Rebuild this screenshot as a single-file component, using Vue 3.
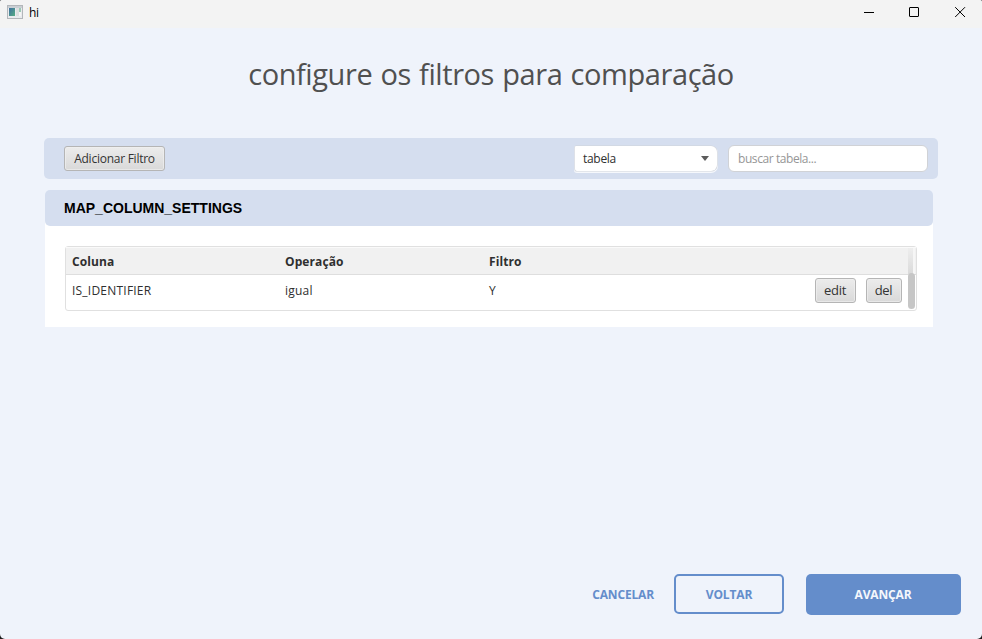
<script setup>
const filters = [{ column: 'IS_IDENTIFIER', operation: 'igual', value: 'Y' }]
</script>

<template>
  <div class="window">
    <header class="titlebar">
      <svg class="app-icon" width="16" height="14" viewBox="0 0 16 14">
        <defs>
          <linearGradient id="pane" x1="0" y1="0" x2="1" y2="1">
            <stop offset="0" stop-color="#3f6fa0" />
            <stop offset="1" stop-color="#55ad83" />
          </linearGradient>
        </defs>
        <rect x="0.5" y="0.5" width="15" height="13" fill="#e9ebee" stroke="#b3b6ba" />
        <rect x="1" y="1" width="14" height="2" fill="#c9ced3" />
        <rect x="2" y="3" width="6" height="8" fill="url(#pane)" />
        <rect x="9" y="3" width="3" height="8" fill="#dcdfe0" />
        <rect x="12" y="3" width="2" height="4" fill="#9bc9b5" />
        <rect x="12" y="7" width="2" height="4" fill="#f5f5f5" />
      </svg>
      <span class="app-name">hi</span>
      <div class="controls">
        <svg width="46" height="24" viewBox="0 0 46 24"><path d="M20 12.5h10" /></svg>
        <svg width="46" height="24" viewBox="0 0 46 24"><rect x="19.5" y="7.5" width="9" height="9" rx="0.4" /></svg>
        <svg width="46" height="24" viewBox="0 0 46 24"><path d="M19.2 7.2l9.8 9.8M29 7.2l-9.8 9.8" /></svg>
      </div>
    </header>

    <h1>configure os filtros para comparação</h1>

    <section class="toolbar">
      <button class="btn add">Adicionar Filtro</button>
      <div class="select">
        <span>tabela</span>
        <svg width="8" height="5" viewBox="0 0 8 5"><path d="M0 0h8L4 5z" fill="#5c5c5c" /></svg>
      </div>
      <input class="search" type="text" placeholder="buscar tabela..." />
    </section>

    <section class="panel">
      <h2>MAP_COLUMN_SETTINGS</h2>
      <div class="panel-body">
        <div class="table">
          <div class="row head">
            <span class="c1">Coluna</span>
            <span class="c2">Operação</span>
            <span class="c3">Filtro</span>
          </div>
          <div v-for="f in filters" :key="f.column" class="row">
            <span class="c1">{{ f.column }}</span>
            <span class="c2">{{ f.operation }}</span>
            <span class="c3">{{ f.value }}</span>
            <button class="btn edit">edit</button>
            <button class="btn del">del</button>
          </div>
          <div class="track"><div class="thumb"></div></div>
        </div>
      </div>
    </section>

    <footer>
      <button class="cancel">CANCELAR</button>
      <button class="back">VOLTAR</button>
      <button class="next">AVANÇAR</button>
    </footer>
  </div>
</template>

<style>
body { background: #1c1c1c; overflow: hidden; }
</style>

<style scoped>
.window {
  display: flex;
  flex-direction: column;
  box-sizing: border-box;
  width: 982px;
  height: 639px;
  border-radius: 2px 2px 5px 5px;
  overflow: hidden;
  background: #eff3fb;
  color: #2f2f2f;
  font: 12px/16px "Open Sans", "Noto Sans", sans-serif;
  white-space: nowrap;
}
button, input {
  box-sizing: border-box;
  margin: 0;
  padding: 0;
  border: 0;
  font: inherit;
  outline: none;
}
.titlebar {
  display: flex;
  align-items: flex-start;
  height: 28px;
  background: #f3f3f3;
}
.app-icon { margin: 5px 0 0 7px; }
.app-name { margin: 5px 0 0 6px; color: #000; letter-spacing: -0.3px; }
.controls { display: flex; margin-left: auto; }
.controls svg { fill: none; stroke: #000; stroke-width: 1; }
h1 {
  margin: 25px 0 0;
  height: 85px;
  text-align: center;
  font-size: 29px;
  line-height: 42px;
  font-weight: 400;
  letter-spacing: -0.42px;
  word-spacing: 1.1px;
  color: #505050;
}
.toolbar {
  display: flex;
  box-sizing: border-box;
  width: 894px;
  height: 41px;
  margin-left: 44px;
  padding: 8px 10px 0 20px;
  border-radius: 5px;
  background: #d5deef;
}
.btn {
  height: 25px;
  border: 1px solid #b5b5b5;
  border-radius: 3px;
  background: linear-gradient(#ececec, #d9d9d9);
  box-shadow: inset 0 0 0 1px #f0f0f0aa;
  color: #333;
}
.add { width: 101px; letter-spacing: -0.25px; }
.select {
  display: flex;
  align-items: center;
  justify-content: space-between;
  box-sizing: border-box;
  width: 142px;
  height: 25px;
  margin: 0 11px 0 auto;
  padding: 0 8px;
  border-radius: 1px 6px 6px 2px;
  background: #fff;
  box-shadow: 0 0 0 0.6px #cfd3da, 0 1px 0 1px #f6f8fc;
  letter-spacing: -0.3px;
}
.search {
  width: 200px;
  height: 27px;
  margin-top: -1px;
  padding: 0 9px;
  border: 1px solid #d0d2d6;
  border-radius: 6px;
  background: #fff;
  letter-spacing: -0.42px;
}
.search::placeholder { color: #969696; opacity: 1; }
.panel { width: 888px; margin: 11px 0 0 45px; background: linear-gradient(#eff3fb 18px, #fff 18px); }
h2 {
  margin: 0;
  height: 36px;
  padding-left: 19px;
  border-radius: 5px;
  background: #d5deef;
  color: #000;
  font: bold 14px/37px "Liberation Sans", Arial, sans-serif;
}
.panel-body { padding: 20px 16px 16px 20px; }
.table {
  position: relative;
  box-sizing: border-box;
  height: 65px;
  border: 1px solid #e0e0e0;
  border-radius: 3px;
  background: #fff;
}
.row { display: flex; align-items: flex-start; height: 34px; letter-spacing: 0.22px; }
.row > span { padding-top: 8px; }
.head {
  box-sizing: border-box;
  height: 28px;
  border-bottom: 1px solid #dedede;
  background: #f1f1f1;
  box-shadow: inset 0 1px #fafafa;
  font-weight: 700;
  letter-spacing: 0.1px;
}
.head > span { padding-top: 7px; }
.c1 { width: 213px; margin-left: 6px; }
.c2 { width: 204px; }
.c3 { width: 326px; }
.row .btn { margin-top: 3px; padding: 0 1px 2px 0; font-size: 13px; letter-spacing: -0.3px; }
.edit { width: 41px; }
.del { width: 36px; margin-left: 10px; }
.track {
  position: absolute;
  top: 1px;
  right: 1px;
  width: 7px;
  height: 61px;
  background: linear-gradient(to right, transparent 5px, #f6f6f6 5px) 0 0 / 7px 26px no-repeat,
    linear-gradient(#eeeeee, #dadada 26px, transparent 26px);
}
.thumb { height: 36px; margin-top: 25px; border-radius: 4px; background: #c6c6c6; }
footer {
  display: flex;
  align-items: flex-start;
  justify-content: flex-end;
  margin: auto 21px 0 0;
  height: 65px;
  font-weight: 700;
}
footer button { letter-spacing: -0.15px; }
.cancel { height: 41px; margin-right: 20px; background: none; color: #648dcb; }
.back {
  width: 110px;
  height: 40px;
  margin-right: 22px;
  padding-top: 1px;
  border: 2px solid #648dcb;
  border-radius: 5px;
  background: transparent;
  color: #648dcb;
}
.next { width: 155px; height: 41px; padding-right: 1px; border-radius: 5px; background: #648dcb; color: #f4f7fc; }
</style>
